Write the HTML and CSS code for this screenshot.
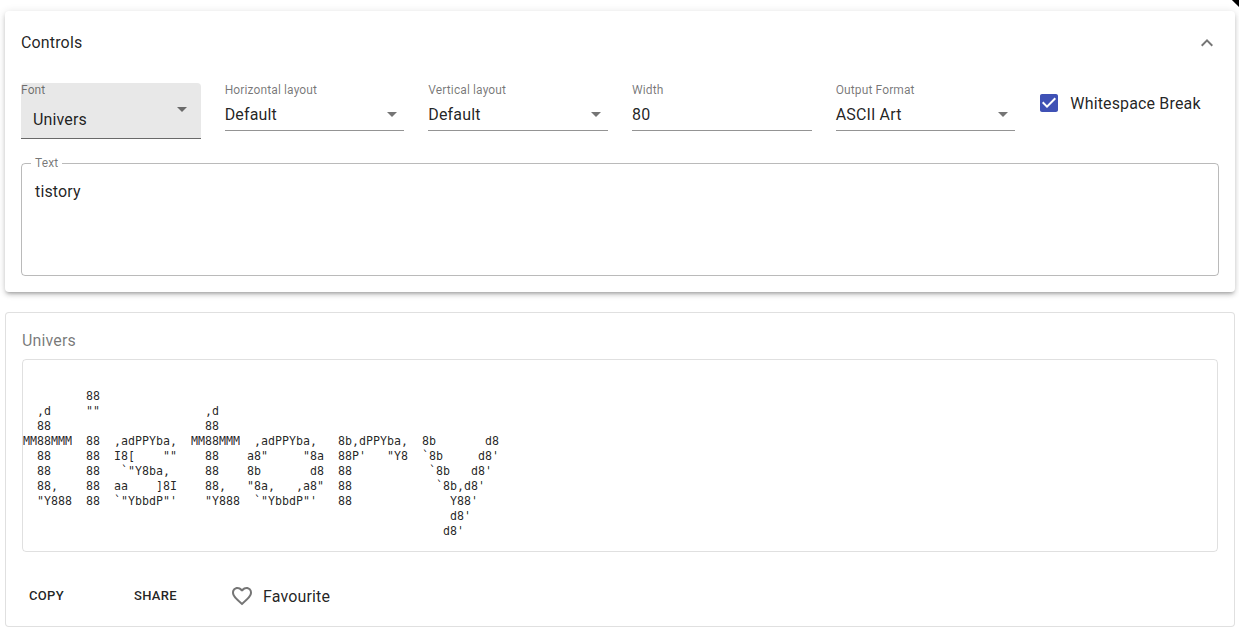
FILE: index.html
```
<!DOCTYPE html>
<html lang="en">
<head>
<meta charset="utf-8">
<title>Controls</title>
<link rel="stylesheet" href="styles.css">
</head>
<body>
<div class="corner"></div>
<main class="page">
  <section class="card controls">
    <header class="controls-head">
      <h2 class="controls-title">Controls</h2>
      <svg class="chevron" viewBox="0 0 24 24"><path d="M12 8l-6 6 1.41 1.41L12 10.83l4.59 4.58L18 14z"/></svg>
    </header>
    <div class="fields">
      <div class="field filled">
        <label class="field-label">Font</label>
        <div class="field-value">Univers<svg class="arrow" viewBox="0 0 24 24"><path d="M7 10l5 5 5-5z"/></svg></div>
      </div>
      <div class="field">
        <label class="field-label">Horizontal layout</label>
        <div class="field-value">Default<svg class="arrow" viewBox="0 0 24 24"><path d="M7 10l5 5 5-5z"/></svg></div>
      </div>
      <div class="field">
        <label class="field-label">Vertical layout</label>
        <div class="field-value">Default<svg class="arrow" viewBox="0 0 24 24"><path d="M7 10l5 5 5-5z"/></svg></div>
      </div>
      <div class="field">
        <label class="field-label">Width</label>
        <div class="field-value">80</div>
      </div>
      <div class="field">
        <label class="field-label">Output Format</label>
        <div class="field-value">ASCII Art<svg class="arrow" viewBox="0 0 24 24"><path d="M7 10l5 5 5-5z"/></svg></div>
      </div>
      <div class="check">
        <svg class="check-box" viewBox="0 0 24 24"><path d="M19 3H5c-1.11 0-2 .9-2 2v14c0 1.1.89 2 2 2h14c1.11 0 2-.9 2-2V5c0-1.1-.89-2-2-2zm-9 14l-5-5 1.41-1.41L10 14.17l7.59-7.59L19 8l-9 9z"/></svg>
        <span>Whitespace Break</span>
      </div>
    </div>
    <fieldset class="text-box">
      <legend class="text-legend">Text</legend>
      <div class="text-value">tistory</div>
    </fieldset>
  </section>
  <section class="card result">
    <h3 class="result-title">Univers</h3>
    <pre class="art">

         88
  ,d     ""               ,d
  88                      88
MM88MMM  88  ,adPPYba,  MM88MMM  ,adPPYba,   8b,dPPYba,  8b       d8
  88     88  I8[    ""    88    a8"     "8a  88P'   "Y8  `8b     d8'
  88     88   `"Y8ba,     88    8b       d8  88           `8b   d8'
  88,    88  aa    ]8I    88,   "8a,   ,a8"  88            `8b,d8'
  "Y888  88  `"YbbdP"'    "Y888  `"YbbdP"'   88              Y88'
                                                             d8'
                                                            d8'</pre>
    <div class="actions">
      <button class="btn btn-copy">COPY</button>
      <button class="btn btn-share">SHARE</button>
      <div class="fav">
        <svg class="heart" viewBox="0 0 24 24"><path d="M16.5 3c-1.74 0-3.41.81-4.5 2.09C10.91 3.81 9.24 3 7.5 3 4.42 3 2 5.42 2 8.5c0 3.78 3.4 6.86 8.55 11.54L12 21.35l1.45-1.32C18.6 15.36 22 12.28 22 8.5 22 5.42 19.58 3 16.5 3zm-4.4 15.55l-.1.1-.1-.1C7.14 14.24 4 11.39 4 8.5 4 6.5 5.5 5 7.5 5c1.54 0 3.04.99 3.57 2.36h1.87C13.46 5.99 14.96 5 16.5 5c2 0 3.5 1.5 3.5 3.5 0 2.89-3.14 5.74-7.9 10.05z"/></svg>
        <span>Favourite</span>
      </div>
    </div>
  </section>
</main>
</body>
</html>
```
FILE: styles.css
```
* { box-sizing: border-box; }
html, body { margin: 0; padding: 0; height: 100%; overflow: hidden; }
body {
  background: #fff;
  color: rgba(0, 0, 0, 0.87);
  font-family: Roboto, "Liberation Sans", sans-serif;
  letter-spacing: .15px;
}
.corner {
  position: absolute;
  top: -5px;
  right: -5px;
  width: 10px;
  height: 10px;
  background: #000;
  transform: rotate(45deg);
}
.page {
  display: flex;
  flex-direction: column;
  gap: 20px;
  padding: 11px 4px 0 5px;
}
.card { background: #fff; border-radius: 4px; }
.controls {
  height: 281px;
  padding: 0 16px;
  box-shadow: 0 3px 3px -2px rgba(0,0,0,.2), 0 3px 4px 0 rgba(0,0,0,.14), 0 1px 8px 0 rgba(0,0,0,.12);
}
.controls-head {
  display: flex;
  align-items: center;
  justify-content: space-between;
  height: 64px;
}
.controls-title { margin: 0; font-size: 16px; font-weight: 400; line-height: 24px; }
.chevron { width: 24px; height: 24px; fill: rgba(0,0,0,.54); }
.fields {
  display: grid;
  grid-template-columns: repeat(6, 1fr);
  column-gap: 24px;
  margin-top: 8px;
  height: 56px;
}
.field {
  position: relative;
  height: 48px;
  border-bottom: 1px solid rgba(0,0,0,.42);
}
.field.filled {
  height: 56px;
  background: #e8e8e8;
  border-radius: 4px 4px 0 0;
  border-bottom-color: rgba(0,0,0,.55);
}
.field-label {
  display: block;
  font-size: 12px;
  letter-spacing: .12px;
  line-height: 14px;
  color: rgba(0,0,0,.54);
}
.field-value {
  position: relative;
  margin-top: 8px;
  font-size: 16px;
  line-height: 19px;
}
.filled .field-value { margin: 13px 0 0 12px; }
.arrow {
  position: absolute;
  right: 0;
  top: -3px;
  width: 24px;
  height: 24px;
  fill: rgba(0,0,0,.54);
}
.filled .arrow { right: 7px; top: -13px; }
.check {
  display: flex;
  align-items: center;
  height: 40px;
  font-size: 16px;
}
.check-box { width: 24px; height: 24px; fill: #3f51b5; margin-right: 9px; flex: none; margin-left: -2px; }
.text-box {
  margin: 17px 0 0;
  padding: 0 13px;
  height: 120px;
  border: 1px solid rgba(0,0,0,.27);
  border-radius: 4px;
  min-width: 0;
}
.text-legend {
  padding: 0 4px;
  margin-left: -4px;
  font-size: 12px;
  letter-spacing: .12px;
  line-height: 14px;
  color: rgba(0,0,0,.54);
}
.text-value { margin-top: 12px; font-size: 16px; line-height: 19px; }
.result {
  height: 315px;
  padding: 0 16px;
  border: 1px solid rgba(0,0,0,.12);
}
.result-title {
  margin: 0;
  padding-top: 18px;
  font-size: 16px;
  font-weight: 400;
  line-height: 19px;
  color: rgba(0,0,0,.54);
}
.art {
  margin: 9px 0 0;
  padding: 14px 0 0;
  height: 193px;
  overflow: hidden;
  border: 1px solid rgba(0,0,0,.12);
  border-radius: 4px;
  font-family: "DejaVu Sans Mono", monospace;
  font-size: 11.63px;
  letter-spacing: 0;
  line-height: 15px;
}
.actions {
  display: flex;
  align-items: center;
  margin-top: 22px;
  height: 44px;
}
.btn {
  border: 0;
  background: none;
  padding: 0 0 2px;
  font-family: inherit;
  font-size: 13px;
  font-weight: 500;
  letter-spacing: .3px;
  color: rgba(0,0,0,.87);
}
.btn-copy { margin-left: 7px; width: 105px; text-align: left; }
.btn-share { width: 96px; text-align: left; }
.fav { display: flex; align-items: center; font-size: 16px; }
.heart { width: 24px; height: 24px; fill: rgba(0,0,0,.54); margin-right: 9px; }
```
